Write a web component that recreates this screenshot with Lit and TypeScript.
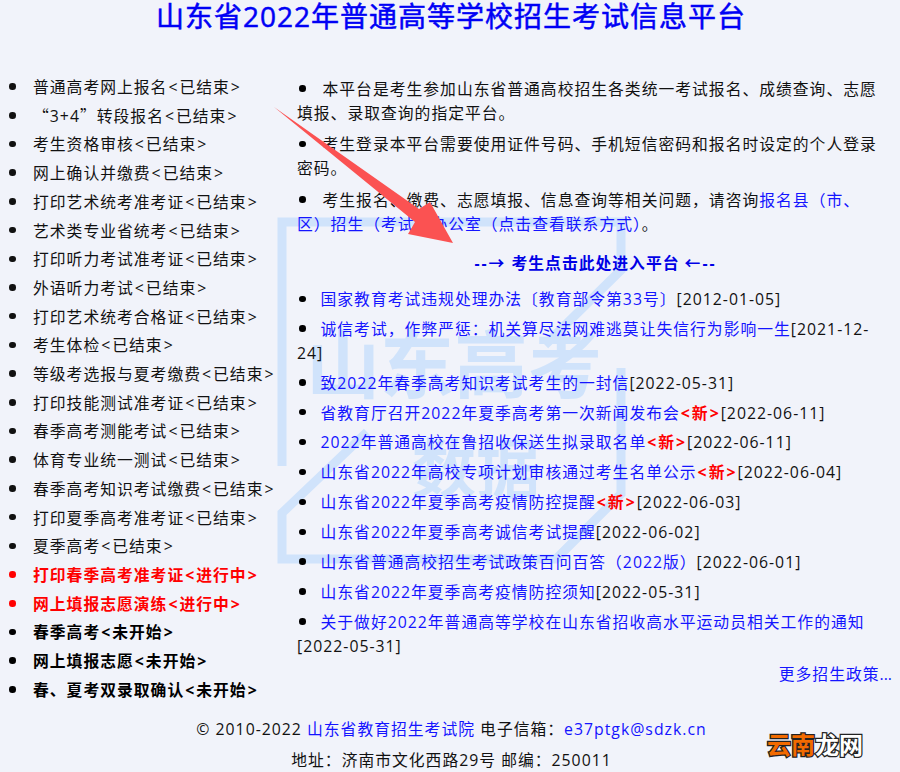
import { LitElement, html, css, svg } from "lit";
import { customElement } from "lit/decorators.js";

const left: [string, string][] = [
  ["普通高考网上报名<已结束>", "done"],
  ["“3+4”转段报名<已结束>", "done"],
  ["考生资格审核<已结束>", "done"],
  ["网上确认并缴费<已结束>", "done"],
  ["打印艺术统考准考证<已结束>", "done"],
  ["艺术类专业省统考<已结束>", "done"],
  ["打印听力考试准考证<已结束>", "done"],
  ["外语听力考试<已结束>", "done"],
  ["打印艺术统考合格证<已结束>", "done"],
  ["考生体检<已结束>", "done"],
  ["等级考选报与夏考缴费<已结束>", "done"],
  ["打印技能测试准考证<已结束>", "done"],
  ["春季高考测能考试<已结束>", "done"],
  ["体育专业统一测试<已结束>", "done"],
  ["春季高考知识考试缴费<已结束>", "done"],
  ["打印夏季高考准考证<已结束>", "done"],
  ["夏季高考<已结束>", "done"],
  ["打印春季高考准考证<进行中>", "active"],
  ["网上填报志愿演练<进行中>", "active"],
  ["春季高考<未开始>", "todo"],
  ["网上填报志愿<未开始>", "todo"],
  ["春、夏考双录取确认<未开始>", "todo"],
];

const news: [string, boolean, string][] = [
  ["国家教育考试违规处理办法〔教育部令第33号〕", false, "[2012-01-05]"],
  ["诚信考试，作弊严惩：机关算尽法网难逃莫让失信行为影响一生", false, "[2021-12-24]"],
  ["致2022年春季高考知识考试考生的一封信", false, "[2022-05-31]"],
  ["省教育厅召开2022年夏季高考第一次新闻发布会", true, "[2022-06-11]"],
  ["2022年普通高校在鲁招收保送生拟录取名单", true, "[2022-06-11]"],
  ["山东省2022年高校专项计划审核通过考生名单公示", true, "[2022-06-04]"],
  ["山东省2022年夏季高考疫情防控提醒", true, "[2022-06-03]"],
  ["山东省2022年夏季高考诚信考试提醒", false, "[2022-06-02]"],
  ["山东省普通高校招生考试政策百问百答（2022版）", false, "[2022-06-01]"],
  ["山东省2022年夏季高考疫情防控须知", false, "[2022-05-31]"],
  ["关于做好2022年普通高等学校在山东省招收高水平运动员相关工作的通知", false, "[2022-05-31]"],
];

const fmt = (s: string) =>
  s.split(/([<>“”])/).map((p) =>
    p === "<" || p === ">"
      ? html`<span class="a">${p}</span>`
      : p === "“" || p === "”"
      ? html`<span class="q">${p}</span>`
      : p
  );

@customElement("app-root")
export class AppRoot extends LitElement {
  static styles = css`
    :host {
      display: block;
      position: relative;
      width: 900px;
      height: 772px;
      overflow: hidden;
      background: #f1f3fa;
      color: #111;
      font-family: "Open Sans", "Noto Sans CJK SC", sans-serif;
      font-size: 15.8px;
      letter-spacing: 1px;
    }
    a { color: #1414ff; text-decoration: none; }
    .a { margin: 0 1px; }
    .q { font-family: "Noto Sans CJK SC", sans-serif; }
    .wm { position: absolute; left: 0; top: 0; }
    .wm text {
      font-family: "Noto Sans CJK SC", sans-serif;
      font-weight: 700;
      letter-spacing: 0;
      fill: #d0e3fb;
    }
    .arrow { position: absolute; left: 0; top: 0; pointer-events: none; }
    .page { position: relative; display: flex; flex-direction: column; }
    h1 {
      margin: 0;
      height: 72px;
      padding-left: 2px;
      box-sizing: border-box;
      text-align: center;
      font-size: 28px;
      line-height: 33px;
      font-weight: 400;
      color: #0000f5;
      -webkit-text-stroke: 0.5px #0000f5;
    }
    .cols { display: flex; }
    ul { list-style: none; margin: 0; padding: 0; }
    .side { width: 297px; flex: none; padding-left: 9px; box-sizing: border-box; padding-top: 1px; }
    .side li { line-height: 28.7px; white-space: nowrap; }
    .side li.active { color: #f00; font-weight: 700; }
    .side li.todo { font-weight: 700; color: #000; }
    li::before {
      content: "";
      display: inline-block;
      width: 6.5px;
      height: 6.5px;
      border-radius: 50%;
      background: currentColor;
      vertical-align: 0.2em;
      margin-right: 17.5px;
    }
    .main { width: 595px; flex: none; padding-top: 6px; }
    .main li { line-height: 23.7px; }
    .main li::before { margin-left: 2px; margin-right: 17px; background: #000; }
    .intro, .news { padding-right: 12px; }
    .intro li { margin-bottom: 8px; }
    .enter { text-align: center; margin: 15px 0 13px; padding-left: 2px; line-height: 24px; font-weight: 700; }
    .enter a { color: #0000e6; }
    .arr { letter-spacing: 2px; }
    .news { display: flex; flex-direction: column; gap: 6.2px; }
    .news li::before { margin-right: 15px; }
    .new { color: #f00; font-weight: 700; }
    .more { text-align: right; margin-top: 4px; line-height: 24px; }
    .dots { letter-spacing: 0; }
    footer { text-align: center; margin-top: 13px; padding-left: 3px; }
    footer p { margin: 0 0 6.2px; line-height: 24px; }
    .brand {
      position: absolute;
      left: 767px;
      top: 728px;
      font-family: "Noto Sans CJK SC", sans-serif;
      font-weight: 700;
      font-size: 24px;
      line-height: 32px;
      letter-spacing: 0;
      color: #fff;
      -webkit-text-stroke: 2.5px #222;
      paint-order: stroke fill;
    }
    .brand span { color: #f26a00; }
  `;

  render() {
    return html`
      <svg class="wm" width="900" height="772" viewBox="0 0 900 772" fill="none" aria-hidden="true">
        ${svg`<path d="M282 466V222H621V270L545 345M621 368V494L556 559H282V513L367 432" stroke="#d0e3fb" stroke-width="9"/>`}
        ${svg`<text x="306" y="392" font-size="74">山东高考</text>`}
        ${svg`<text x="412" y="492" font-size="64">数据</text>`}
      </svg>
      <div class="page">
        <h1>山东省2022年普通高等学校招生考试信息平台</h1>
        <div class="cols">
          <ul class="side">
            ${left.map(([t, c]) => html`<li class=${c}>${fmt(t)}</li>`)}
          </ul>
          <div class="main">
            <ul class="intro">
              <li>本平台是考生参加山东省普通高校招生各类统一考试报名、成绩查询、志愿填报、录取查询的指定平台。</li>
              <li>考生登录本平台需要使用证件号码、手机短信密码和报名时设定的个人登录密码。</li>
              <li>考生报名、缴费、志愿填报、信息查询等相关问题，请咨询<a href="#">报名县（市、区）招生（考试）办公室（点击查看联系方式）</a>。</li>
            </ul>
            <div class="enter"><a href="#"><span class="arr">--→</span> 考生点击此处进入平台 <span class="arr">←--</span></a></div>
            <ul class="news">
              ${news.map(
                ([t, n, d]) => html`<li><a href="#">${t}</a>${n ? html`<span class="new">${fmt("<新>")}</span>` : ""}${d}</li>`
              )}
            </ul>
            <div class="more"><a href="#">更多招生政策<span class="dots">...</span></a></div>
          </div>
        </div>
        <footer>
          <p>© 2010-2022 <a href="#">山东省教育招生考试院</a> 电子信箱：<a href="#">e37ptgk@sdzk.cn</a></p>
          <p>地址：济南市文化西路29号 邮编：250011</p>
        </footer>
      </div>
      <svg class="arrow" width="900" height="772" viewBox="0 0 900 772" aria-hidden="true">
        ${svg`<polygon points="274,107 419,209 430,202 453,243 408,234 415,222" fill="#fb5252"/>`}
      </svg>
      <div class="brand"><span>云南</span>龙网</div>
    `;
  }
}
